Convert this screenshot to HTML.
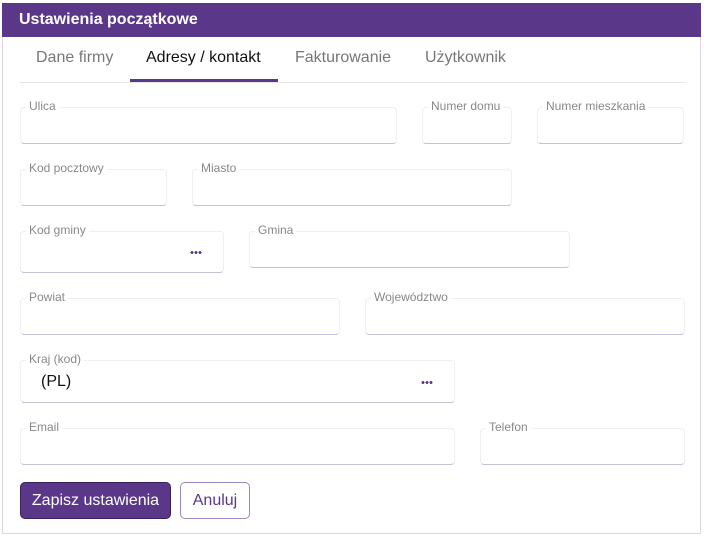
<!DOCTYPE html><html><head><meta charset="utf-8"><style>
body{margin:0;width:704px;height:538px;background:#fff;font-family:"Liberation Sans",sans-serif;position:relative;overflow:hidden}
.frame{position:absolute;left:2px;top:3px;width:697px;height:530px;border:1px solid #ddd3ea;border-top:none}
.hdr{position:absolute;left:2px;top:3px;width:699px;height:34px;background:#5a3788;color:#fff;font-weight:bold;font-size:16px;line-height:34px;padding-left:17px;box-sizing:border-box}
.tab{position:absolute;top:49px;font-size:16px;color:#777}
.f{position:absolute;border:1px solid #f0edf4;border-bottom:1px solid #c9bfd6;border-radius:4px;box-sizing:border-box}
.l{position:absolute;font-size:12px;color:#888;background:#fff;padding:0 3px;top:-9px;left:5px;line-height:14px}
.dots{position:absolute;right:21px;top:50%;margin-top:-1px;width:12px;height:3px;background:radial-gradient(circle,#5a3788 1.3px,transparent 1.6px) 0 0/4px 3px repeat-x}
.btn{position:absolute;top:482px;height:37px;border-radius:5px;box-sizing:border-box;font-size:16px;line-height:35px;text-align:center}
</style></head><body>
<div class="frame"></div>
<div class="hdr">Ustawienia początkowe</div>
<div class="tab" style="left:36px">Dane firmy</div>
<div class="tab" style="left:146px;color:#111">Adresy / kontakt</div>
<div class="tab" style="left:295px">Fakturowanie</div>
<div class="tab" style="left:425px">Użytkownik</div>
<div style="position:absolute;left:20px;top:82px;width:665px;height:1px;background:#e4e4e4"></div>
<div style="position:absolute;left:130px;top:79px;width:148px;height:3px;background:#5a3788"></div>

<div class="f" style="left:20px;top:107px;width:377px;height:37px"><span class="l">Ulica</span></div>
<div class="f" style="left:422px;top:107px;width:90px;height:37px"><span class="l">Numer domu</span></div>
<div class="f" style="left:537px;top:107px;width:147px;height:37px"><span class="l">Numer mieszkania</span></div>
<div class="f" style="left:20px;top:169px;width:147px;height:37px"><span class="l">Kod pocztowy</span></div>
<div class="f" style="left:192px;top:169px;width:320px;height:37px"><span class="l">Miasto</span></div>
<div class="f" style="left:20px;top:231px;width:204px;height:42px"><span class="l">Kod gminy</span><span class="dots"></span></div>
<div class="f" style="left:249px;top:231px;width:321px;height:37px"><span class="l">Gmina</span></div>
<div class="f" style="left:20px;top:298px;width:320px;height:37px"><span class="l">Powiat</span></div>
<div class="f" style="left:365px;top:298px;width:320px;height:37px"><span class="l">Województwo</span></div>
<div class="f" style="left:20px;top:360px;width:435px;height:43px"><span class="l">Kraj (kod)</span><span style="position:absolute;left:20px;top:12px;font-size:16px;color:#111">(PL)</span><span class="dots"></span></div>
<div class="f" style="left:20px;top:428px;width:435px;height:37px"><span class="l">Email</span></div>
<div class="f" style="left:480px;top:428px;width:205px;height:37px"><span class="l">Telefon</span></div>

<div class="btn" style="left:20px;width:151px;background:#5a3788;border:1px solid #3a2258;color:#fff">Zapisz ustawienia</div>
<div class="btn" style="left:180px;width:70px;background:#fff;border:1px solid #9f86c0;color:#5a3788">Anuluj</div>
</body></html>
